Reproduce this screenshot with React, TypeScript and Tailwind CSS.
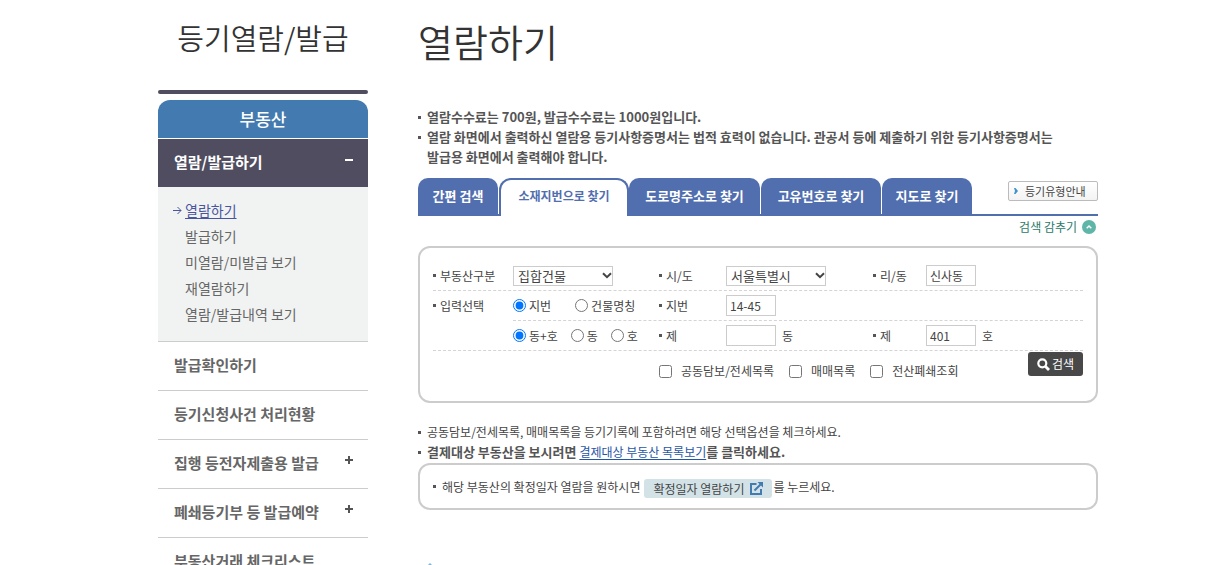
import type { ReactNode } from "react";

const Bullet = () => <span aria-hidden="true" className="size-[3px] shrink-0 bg-[#555]" />;

const subLinks = ["열람하기", "발급하기", "미열람/미발급 보기", "재열람하기", "열람/발급내역 보기"];

const menu = [
  { label: "발급확인하기", plus: false },
  { label: "등기신청사건 처리현황", plus: false },
  { label: "집행 등전자제출용 발급", plus: true },
  { label: "폐쇄등기부 등 발급예약", plus: true },
  { label: "부동산거래 체크리스트", plus: false },
];

function Sidebar() {
  return (
    <aside className="w-[210px] shrink-0">
      <h2 className="h-[90px] pt-[17px] text-center text-[29px] leading-[40px] font-[350] text-[#333]">
        등기열람/발급
      </h2>
      <div className="h-1 rounded-full bg-[#4f4d5f]" />
      <div className="mt-[6px] h-[38px] rounded-t-[12px] bg-[#437aaf] text-center text-[17px] leading-[38px] font-medium text-white">
        부동산
      </div>
      <nav aria-label="부동산">
        <a
          href="#view"
          className="mt-px flex h-12 items-center justify-between bg-[#4f4d5f] pr-[15px] pb-[2px] pl-4 text-[15px] font-bold text-white"
        >
          열람/발급하기
          <span aria-hidden="true" className="mb-[5px] h-[2px] w-2 bg-white" />
        </a>
        <ul className="border-b border-[#ccc] bg-[#f1f3f2] pt-[10px] pb-[14px] text-[14px] leading-[26px] text-[#666]">
          {subLinks.map((label, i) => (
            <li key={label} className="flex items-center pl-[15px]">
              <span className="w-3 shrink-0">
                {i === 0 && (
                  <svg width="9" height="9" viewBox="0 0 9 9" fill="none" stroke="#4a55a0" aria-hidden="true">
                    <path d="M0 4.5H8M4.5 1L8 4.5L4.5 8" />
                  </svg>
                )}
              </span>
              <a href="#sub" className={i === 0 ? "text-[#4a55a0] underline underline-offset-2" : ""}>
                {label}
              </a>
            </li>
          ))}
        </ul>
        <ul className="text-[15px] font-bold text-[#666]">
          {menu.map((item) => (
            <li key={item.label} className="border-b border-[#ccc]">
              <a href="#menu" className="flex h-12 items-center justify-between pr-[15px] pb-[2px] pl-4">
                {item.label}
                {item.plus && (
                  <svg width="8" height="8" viewBox="0 0 8 8" fill="#555" className="mb-[6px]" aria-hidden="true">
                    <path d="M3 0H5V3H8V5H5V8H3V5H0V3H3Z" />
                  </svg>
                )}
              </a>
            </li>
          ))}
        </ul>
      </nav>
    </aside>
  );
}

function Tab({ children, width }: { children: ReactNode; width: string }) {
  return (
    <li className="border-b-2 border-[#516eaf] pr-px">
      <a
        href="#tab"
        className={`block h-9 rounded-t-[10px] bg-[#516eaf] text-center text-[13px] leading-[36px] font-bold text-white ${width}`}
      >
        {children}
      </a>
    </li>
  );
}

function Tabs() {
  return (
    <ul className="mt-[11px] flex h-[38px]">
      <Tab width="w-[80px]">간편 검색</Tab>
      <li>
        <a
          href="#tab"
          aria-current="page"
          className="block h-[38px] w-[130px] rounded-t-[12px] border-2 border-b-0 border-[#516eaf] text-center text-[12px] leading-[32px] font-bold text-[#516eaf]"
        >
          소재지번으로 찾기
        </a>
      </li>
      <Tab width="w-[131px]">도로명주소로 찾기</Tab>
      <Tab width="w-[120px]">고유번호로 찾기</Tab>
      <Tab width="w-[90px]">지도로 찾기</Tab>
      <li className="flex flex-1 justify-end border-b-2 border-[#516eaf] pt-[3px]">
        <button
          type="button"
          className="flex h-5 w-[90px] items-center gap-[7px] rounded-[2px] border border-[#bbb] bg-linear-to-b from-white to-[#f3f3f3] pl-[5px] text-[11px] whitespace-nowrap text-[#444]"
        >
          <svg width="4" height="6" viewBox="0 0 4 6" fill="#3f92cc" aria-hidden="true">
            <path d="M0 0H1.5L4 3L1.5 6H0L1 3Z" />
          </svg>
          등기유형안내
        </button>
      </li>
    </ul>
  );
}

const field = "h-[21px] w-[50px] border border-[#ccc] px-[3px] text-[12px] text-[#444]";

function Select({ id, value }: { id: string; value: string }) {
  return (
    <span className="grid w-[100px] items-center">
      <select
        id={id}
        className="col-start-1 row-start-1 h-5 w-full appearance-none border border-[#ccc] bg-white pl-1 text-[13px] leading-[18px] text-[#444]"
      >
        <option>{value}</option>
      </select>
      <svg
        width="10"
        height="7"
        viewBox="0 0 10 7"
        fill="none"
        stroke="#444"
        strokeWidth="2"
        aria-hidden="true"
        className="pointer-events-none col-start-1 row-start-1 mr-px justify-self-end"
      >
        <path d="M1 1.2L5 5.2L9 1.2" />
      </svg>
    </span>
  );
}

const FieldLabel = ({ id, children }: { id: string; children: ReactNode }) => (
  <label htmlFor={id} className="flex items-center gap-1">
    <Bullet />
    {children}
  </label>
);

function Radio({ name, label, checked }: { name: string; label: string; checked?: boolean }) {
  return (
    <label className="flex items-center gap-[3px]">
      <input type="radio" name={name} defaultChecked={checked} className="size-[13px]" />
      {label}
    </label>
  );
}

function Check({ label }: { label: string }) {
  return (
    <label className="flex items-center gap-[9px]">
      <input type="checkbox" className="size-[13px]" />
      {label}
    </label>
  );
}

const row = "grid h-[30px] items-center border-b border-dashed border-[#d4d4d4]";
const wide = "grid-cols-[80px_146px_67px_147px_53px_1fr]";
const inner = "grid-cols-[146px_67px_147px_53px_1fr]";

function SearchForm() {
  return (
    <form className="rounded-[12px] border-2 border-[#ccc] px-[13px] pt-[13px] pb-[21px] text-[12px] text-[#444]">
      <div className={`${row} ${wide}`}>
        <FieldLabel id="kind">부동산구분</FieldLabel>
        <Select id="kind" value="집합건물" />
        <FieldLabel id="city">시/도</FieldLabel>
        <Select id="city" value="서울특별시" />
        <FieldLabel id="dong">리/동</FieldLabel>
        <input id="dong" defaultValue="신사동" className={field} />
      </div>
      <div className="grid grid-cols-[80px_1fr] border-b border-dashed border-[#d4d4d4]">
        <div className="flex h-[29px] items-center gap-1">
          <Bullet />
          입력선택
        </div>
        <div>
          <div className={`${row} ${inner}`}>
            <div className="flex gap-6">
              <Radio name="mode" label="지번" checked />
              <Radio name="mode" label="건물명칭" />
            </div>
            <FieldLabel id="lot">지번</FieldLabel>
            <input id="lot" defaultValue="14-45" className={field} />
          </div>
          <div className={`grid h-[29px] items-center ${inner}`}>
            <div className="flex gap-[13px]">
              <Radio name="unit" label="동+호" checked />
              <Radio name="unit" label="동" />
              <Radio name="unit" label="호" />
            </div>
            <FieldLabel id="building">제</FieldLabel>
            <div className="flex items-center gap-[6px]">
              <input id="building" className={field} />동
            </div>
            <FieldLabel id="room">제</FieldLabel>
            <div className="flex items-center gap-[6px]">
              <input id="room" defaultValue="401" className={field} />호
            </div>
          </div>
        </div>
      </div>
      <div className="flex items-start justify-between pt-px pl-[226px]">
        <div className="flex gap-[15px] pt-[10px] leading-[18px]">
          <Check label="공동담보/전세목록" />
          <Check label="매매목록" />
          <Check label="전산폐쇄조회" />
        </div>
        <button
          type="submit"
          className="flex h-6 w-[55px] items-center justify-center gap-[2px] rounded-[3px] bg-[#484848] text-[12px] text-white"
        >
          <svg width="13" height="13" viewBox="0 0 13 13" fill="none" stroke="white" aria-hidden="true">
            <circle cx="5.3" cy="5.3" r="4" strokeWidth="2.2" />
            <path d="M8.5 8.5L12 12" strokeWidth="2.8" />
          </svg>
          검색
        </button>
      </div>
    </form>
  );
}

export default function App() {
  return (
    <div className="h-screen overflow-hidden bg-white font-['Noto_Sans_CJK_KR',sans-serif]">
      <div className="mx-auto flex max-w-[990px] gap-[50px] pl-[50px]">
        <Sidebar />
        <main className="min-w-0 flex-1 text-[12px] leading-5 text-[#444]">
          <h1 className="h-[107px] pt-4 text-[38px] leading-[50px] font-[350] text-[#333]">열람하기</h1>
          <ul className="text-[13px] font-bold text-[#555]">
            <li className="flex gap-[6px]">
              <span className="flex h-5 items-center">
                <Bullet />
              </span>
              열람수수료는 700원, 발급수수료는 1000원입니다.
            </li>
            <li className="flex gap-[6px]">
              <span className="flex h-5 items-center">
                <Bullet />
              </span>
              <span>
                열람 화면에서 출력하신 열람용 등기사항증명서는 법적 효력이 없습니다. 관공서 등에 제출하기 위한
                등기사항증명서는
                <br />
                발급용 화면에서 출력해야 합니다.
              </span>
            </li>
          </ul>
          <Tabs />
          <div className="flex h-[30px] justify-end pt-px pr-[2px]">
            <button type="button" className="flex h-5 items-center gap-[5px] text-[#2a7a68]">
              검색 감추기
              <svg width="14" height="14" viewBox="0 0 14 14" aria-hidden="true">
                <circle cx="7" cy="7" r="7" fill="#5fb5a8" />
                <path d="M4.7 8.2L7 6L9.3 8.2" fill="none" stroke="white" strokeWidth="1.5" />
              </svg>
            </button>
          </div>
          <SearchForm />
          <ul className="mt-[19px]">
            <li className="flex items-center gap-[6px]">
              <Bullet />
              공동담보/전세목록, 매매목록을 등기기록에 포함하려면 해당 선택옵션을 체크하세요.
            </li>
            <li className="flex h-5 items-center gap-[6px]">
              <Bullet />
              <span className="text-[13px] font-bold text-[#555]">
                결제대상 부동산을 보시려면{" "}
                <a href="#list" className="text-[12px] font-normal text-[#1f56a5] underline underline-offset-2">
                  결제대상 부동산 목록보기
                </a>
                를 클릭하세요.
              </span>
            </li>
          </ul>
          <div className="mt-px flex h-[47px] items-start rounded-[12px] border-2 border-[#ccc] px-[13px] pt-[10px]">
            <div className="flex items-center">
              <Bullet />
              <span className="ml-[6px]">해당 부동산의 확정일자 열람을 원하시면</span>
              <button
                type="button"
                className="mt-1 mr-px ml-1 flex h-[19px] items-center gap-[6px] rounded-[3px] bg-[#d3e2e7] px-[9px]"
              >
                확정일자 열람하기
                <svg width="13" height="13" viewBox="0 0 13 13" fill="none" stroke="#437aaf" strokeWidth="2" aria-hidden="true">
                  <path d="M6.5 2H1V12H11V7" />
                  <path d="M4.5 8.5L10.5 2.5" />
                  <path d="M7.5 0H13V5.5Z" fill="#437aaf" stroke="none" />
                </svg>
              </button>
              를 누르세요.
            </div>
          </div>
          <svg width="24" height="20" viewBox="0 0 24 20" className="mt-[52px]" fill="#7fb5dd" aria-hidden="true">
            <path d="M12 1L22 11L12 20L2 11Z" />
          </svg>
        </main>
      </div>
    </div>
  );
}
